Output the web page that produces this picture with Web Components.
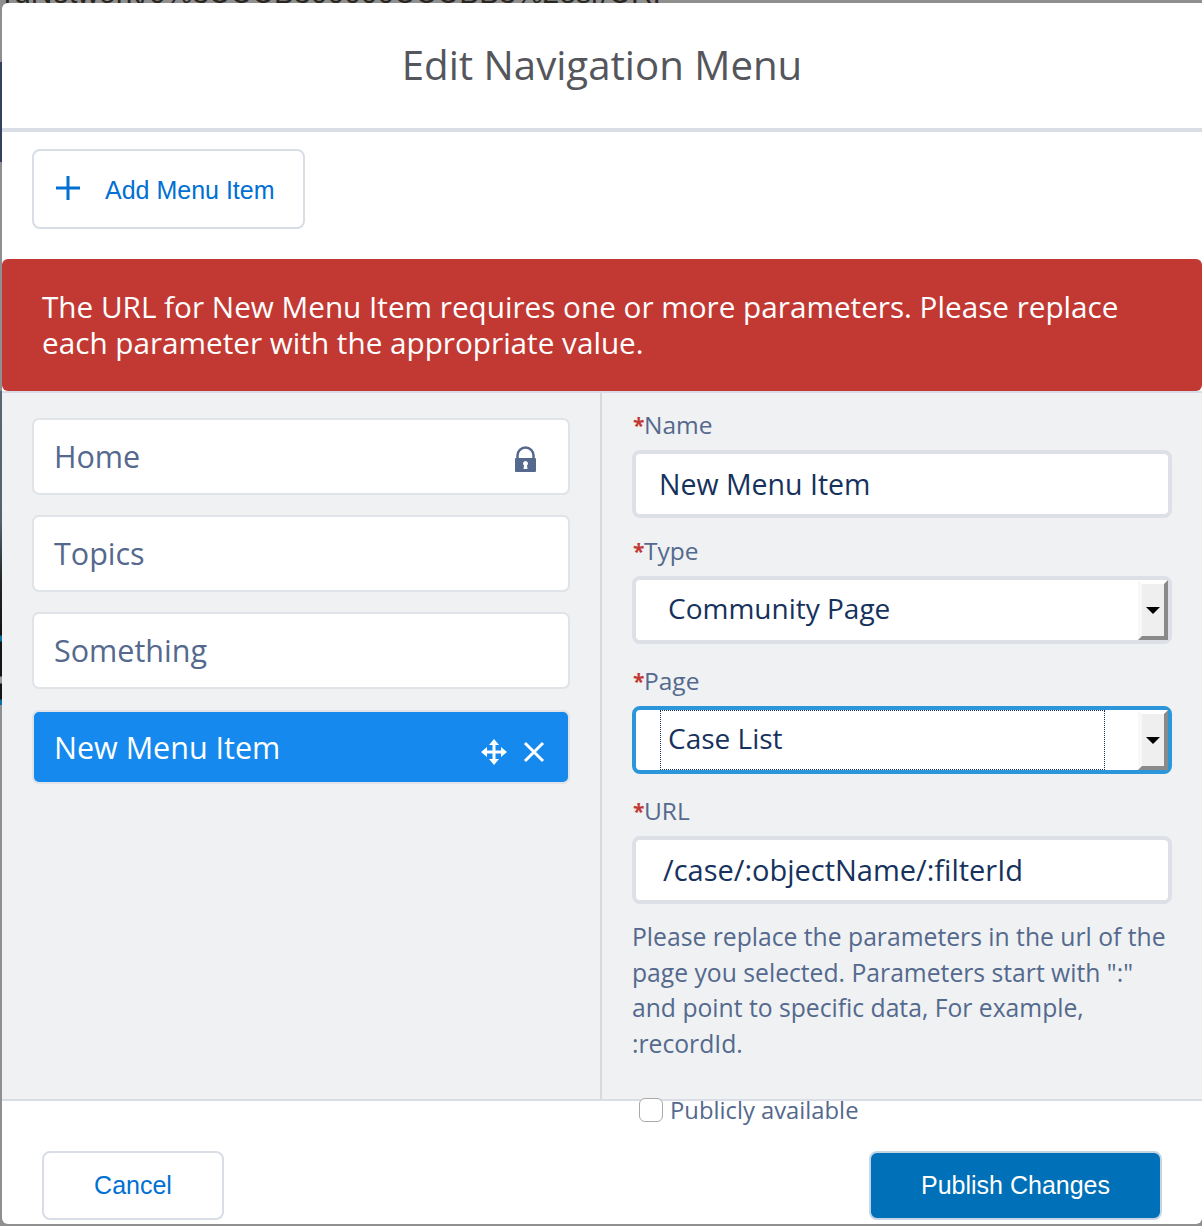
<!DOCTYPE html>
<html lang="en">
<head>
<meta charset="utf-8">
<title>Edit Navigation Menu</title>
<style>
  html, body { margin: 0; height: 100%; }
  body { background: #8f8f8f; overflow: hidden; font-family: "Open Sans", "Liberation Sans", sans-serif; }
</style>
</head>
<body>
<nav-modal>
  <span slot="title">Edit Navigation Menu</span>
  <action-button slot="toolbar" plus>Add Menu Item</action-button>
  <span slot="error">The URL for New Menu Item requires one or more parameters. Please replace each parameter with the appropriate value.</span>

  <menu-item slot="list" locked>Home</menu-item>
  <menu-item slot="list">Topics</menu-item>
  <menu-item slot="list">Something</menu-item>
  <menu-item slot="list" active>New Menu Item</menu-item>

  <form-field slot="form" label="Name" tight><text-box>New Menu Item</text-box></form-field>
  <form-field slot="form" label="Type"><select-box>Community Page</select-box></form-field>
  <form-field slot="form" label="Page"><select-box focused>Case List</select-box></form-field>
  <form-field slot="form" label="URL"><text-box url>/case/:objectName/:filterId</text-box></form-field>
  <help-text slot="form">Please replace the parameters in the url of the page you selected. Parameters start with ":" and point to specific data, For example, :recordId.</help-text>
  <check-row slot="form">Publicly available</check-row>

  <action-button slot="cancel" wide>Cancel</action-button>
  <action-button slot="publish" primary>Publish Changes</action-button>
</nav-modal>

<script>
const modalTemplate = document.createElement("template");
modalTemplate.innerHTML = `<style>
  :host { display: block; position: relative; width: 1202px; height: 1226px; overflow: hidden; box-sizing: border-box; padding: 3px 0 2px 2px; }
  .behind { position: absolute; left: 0; top: -20px; width: 1202px; height: 23px; overflow: hidden; white-space: nowrap;
    font: 30px/26px "Liberation Sans", sans-serif; color: #2a2622; padding-left: 4px; }
  .edge { position: absolute; left: 0; width: 2px; }
  .edge.a { top: 62px; height: 100px; background: #33415c; }
  .edge.b { top: 391px; height: 314px; background: linear-gradient(#5b6670 0, #55626b 130px, #20262a 190px, #141414 240px, #141414 244px, #0b6ea8 245px, #0b6ea8 250px, #141414 251px, #141414 285px, #9a9a9a 286px, #9a9a9a 292px, #141414 293px, #141414 308px, #0b6ea8 309px, #0b6ea8 314px); }
  .box { position: relative; height: 100%; background: #fff; border-radius: 6px 0 6px 6px; display: flex; flex-direction: column; overflow: visible; }
  header { flex: none; height: 125px; box-sizing: border-box; display: flex; align-items: center; justify-content: center; padding-bottom: 2px;
    font-size: 40.2px; color: #54565b; }
  .rule { flex: none; height: 4px; background: #d8dde6; }
  .toolbar { flex: none; height: 127px; box-sizing: border-box; padding: 17px 30px 0; }
  .error { flex: none; height: 132px; box-sizing: border-box; padding: 30px 40px 0; background: #c23934; color: #fff; border-radius: 6px;
    font-size: 29.7px; line-height: 36px; }
  .body { flex: none; height: 708px; box-sizing: border-box; display: flex; background: #eff1f3; border-top: 2px solid #d8dde6; }
  .list { flex: none; width: 600px; box-sizing: border-box; padding: 25px 30px 0; border-right: 2px solid #d8d9dc; }
  .form { flex: 1; box-sizing: border-box; padding: 17px 30px 0 30px; min-width: 0; }
  footer { flex: 1; border-top: 2px solid #d8dde6; display: flex; justify-content: space-between; align-items: flex-start; padding: 50px 40px 0; }
</style>
<div class="behind">rdNetwork/0%3UUUB300000UUUBB3%2esr/URI</div>
<div class="edge a"></div>
<div class="edge b"></div>
<div class="box">
  <header><slot name="title"></slot></header>
  <div class="rule"></div>
  <div class="toolbar"><slot name="toolbar"></slot></div>
  <div class="error"><slot name="error"></slot></div>
  <div class="body">
    <div class="list"><slot name="list"></slot></div>
    <div class="form"><slot name="form"></slot></div>
  </div>
  <footer><slot name="cancel"></slot><slot name="publish"></slot></footer>
</div>`;

class NavModal extends HTMLElement {
  constructor() {
    super();
    this.attachShadow({ mode: "open" });
    this.shadowRoot.appendChild(modalTemplate.content.cloneNode(true));
  }
}

const buttonTemplate = document.createElement("template");
buttonTemplate.innerHTML = `<style>
  :host { display: inline-flex; box-sizing: border-box; align-items: center; justify-content: center; height: 69px; width: 182px;
    background: #fff; border: 2px solid #d8dde6; border-radius: 8px; color: #0070d2; font: 25px "Liberation Sans", sans-serif; }
  :host([plus]) { width: 273px; height: 80px; justify-content: flex-start; padding: 2px 0 0 21px; }
  :host([primary]) { width: 293px; background: #0070b8; color: #fff; border-color: #c4d6e4; }
  svg { display: none; width: 26px; height: 26px; margin: -5px 24px 0 0; }
  :host([plus]) svg { display: block; }
</style>
<svg viewBox="0 0 26 26"><path d="M13 1v24M1 13h24" fill="none" stroke="currentColor" stroke-width="3"/></svg>
<slot></slot>`;

class ActionButton extends HTMLElement {
  constructor() {
    super();
    this.attachShadow({ mode: "open" });
    this.shadowRoot.appendChild(buttonTemplate.content.cloneNode(true));
  }
}

const itemTemplate = document.createElement("template");
itemTemplate.innerHTML = `<style>
  :host { display: flex; box-sizing: border-box; align-items: center; height: 77px; margin-bottom: 20px; padding: 0 30px 0 20px; background: #fff;
    border: 2px solid #e0e3e8; border-radius: 7px; color: #54698d; font-size: 30.5px; }
  :host([active]) { height: 74px; margin-top: 21px; background: #1589ee; color: #fff; }
  .text { flex: 1; padding-bottom: 2px; }
  :host([active]) .text { padding-bottom: 0; }
  .icons { display: flex; align-items: center; gap: 16px; color: inherit; }
  svg { display: none; }
  :host([locked]) .lock { display: block; margin: 6px 1px 0 0; }
  :host([active]) .move, :host([active]) .close { display: block; margin-top: 9px; }
  :host([active]) .icons { margin-right: -7px; }
</style>
<div class="text"><slot></slot></div>
<div class="icons">
  <svg class="lock" width="23" height="27" viewBox="0 0 23 27">
    <path d="M3.500 12V9.500a8 8 0 0 1 16 0V12" fill="none" stroke="currentColor" stroke-width="2.500"/>
    <path fill-rule="evenodd" fill="currentColor" d="M2 12h19a1 1 0 0 1 1 1v12a1 1 0 0 1-1 1H2a1 1 0 0 1-1-1V13a1 1 0 0 1 1-1zM11.500 15a2.500 2.500 0 0 0-1.500 4.500L9.500 23h4l-.5-3.500A2.500 2.500 0 0 0 11.500 15z"/>
  </svg>
  <svg class="move" width="26" height="26" viewBox="0 0 26 26" fill="currentColor">
    <path d="M13 0l5 6h-3.500v5.500H20V8l6 5-6 5v-3.500h-5.500V20H18l-5 6-5-6h3.500v-5.500H6V18l-6-5 6-5v3.500h5.500V6H8z"/>
  </svg>
  <svg class="close" width="22" height="22" viewBox="0 0 22 22"><path d="M2 2l18 18M20 2L2 20" fill="none" stroke="currentColor" stroke-width="3"/></svg>
</div>`;

class MenuItem extends HTMLElement {
  constructor() {
    super();
    this.attachShadow({ mode: "open" });
    this.shadowRoot.appendChild(itemTemplate.content.cloneNode(true));
  }
}

const fieldTemplate = document.createElement("template");
fieldTemplate.innerHTML = `<style>
  :host { display: block; margin-bottom: 22px; color: #54698d; font-size: 24.5px; }
  :host([tight]) { margin-bottom: 18px; }
  .label { height: 40px; line-height: 30px; display: flex; }
  .star { color: #c23934; width: 12px; font-size: 21px; font-weight: 700; padding-left: 1px; box-sizing: border-box; }
</style>
<div class="label"><span class="star">*</span><span class="name"></span></div>
<slot></slot>`;

class FormField extends HTMLElement {
  constructor() {
    super();
    this.attachShadow({ mode: "open" });
    this.shadowRoot.appendChild(fieldTemplate.content.cloneNode(true));
  }

  connectedCallback() {
    this.shadowRoot.querySelector(".name").textContent = this.getAttribute("label");
  }
}

const textBoxTemplate = document.createElement("template");
textBoxTemplate.innerHTML = `<style>
  :host { display: flex; box-sizing: border-box; align-items: center; height: 68px; padding-left: 23px; background: #fff;
    border: 4px solid #dde0e6; border-radius: 8px; color: #16325c; font-size: 28.5px; }
  :host([url]) { padding: 0 0 2px 27px; font-size: 29px; }
</style>
<slot></slot>`;

class TextBox extends HTMLElement {
  constructor() {
    super();
    this.attachShadow({ mode: "open" });
    this.shadowRoot.appendChild(textBoxTemplate.content.cloneNode(true));
  }
}

const selectTemplate = document.createElement("template");
selectTemplate.innerHTML = `<style>
  :host { display: flex; box-sizing: border-box; height: 68px; background: #fff; border: 4px solid #dde0e6; border-radius: 8px;
    color: #16325c; font-size: 28px; }
  :host([focused]) { border-color: #2b96d9; }
  .value { flex: 1; display: flex; align-items: center; padding: 0 0 4px 32px; }
  :host([focused]) .value { flex: none; width: 445px; box-sizing: border-box; margin-left: 24px; padding: 0 0 4px 7px; border: 1px dotted #16325c; }
  .spacer { flex: 1; display: none; }
  :host([focused]) .spacer { display: block; }
  .arrow { flex: none; width: 30px; box-sizing: border-box; display: flex; align-items: center; justify-content: center; background: #efefef;
    border-left: 4px solid #f8f8f8; border-top: 4px solid #fff; border-right: 4px solid #8a8a8a; border-bottom: 4px solid #8a8a8a; }
  .arrow i { width: 0; height: 0; border: 7px solid transparent; border-top: 7px solid #000; border-bottom: 0; }
</style>
<div class="value"><slot></slot></div>
<div class="spacer"></div>
<div class="arrow"><i></i></div>`;

class SelectBox extends HTMLElement {
  constructor() {
    super();
    this.attachShadow({ mode: "open" });
    this.shadowRoot.appendChild(selectTemplate.content.cloneNode(true));
  }
}

const helpTemplate = document.createElement("template");
helpTemplate.innerHTML = `<style>
  :host { display: block; margin-top: -7px; color: #54698d; font-size: 24.7px; line-height: 35.500px; width: 540px; }
</style>
<slot></slot>`;

class HelpText extends HTMLElement {
  constructor() {
    super();
    this.attachShadow({ mode: "open" });
    this.shadowRoot.appendChild(helpTemplate.content.cloneNode(true));
  }
}

const checkTemplate = document.createElement("template");
checkTemplate.innerHTML = `<style>
  :host { display: flex; position: relative; z-index: 1; align-items: center; gap: 7px; margin: 34px 0 0 7px; color: #54698d; font-size: 23.8px; line-height: 30px; }
  i { display: block; box-sizing: border-box; width: 24px; height: 24px; background: #fff; border: 1.500px solid #a9a9a9; border-radius: 6px; }
</style>
<i></i><slot></slot>`;

class CheckRow extends HTMLElement {
  constructor() {
    super();
    this.attachShadow({ mode: "open" });
    this.shadowRoot.appendChild(checkTemplate.content.cloneNode(true));
  }
}

customElements.define("nav-modal", NavModal);
customElements.define("action-button", ActionButton);
customElements.define("menu-item", MenuItem);
customElements.define("form-field", FormField);
customElements.define("text-box", TextBox);
customElements.define("select-box", SelectBox);
customElements.define("help-text", HelpText);
customElements.define("check-row", CheckRow);
</script>
</body>
</html>
